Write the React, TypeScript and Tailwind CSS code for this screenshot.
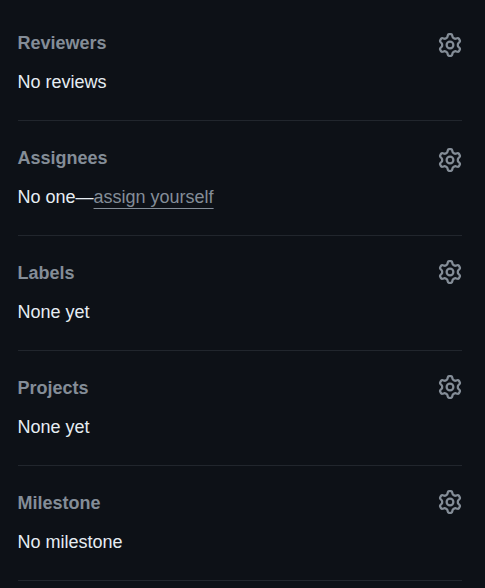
const rows = [
  { title: "Reviewers", text: "No reviews", iconOffset: "mt-3.5" },
  { title: "Assignees", text: "No one—", link: "assign yourself", iconOffset: "mt-3.5" },
  { title: "Labels", text: "None yet", iconOffset: "mt-[11px]" },
  { title: "Projects", text: "None yet", iconOffset: "mt-[11px]" },
  { title: "Milestone", text: "No milestone", iconOffset: "mt-[11px]" },
];

function GearIcon() {
  return (
    <svg viewBox="0 0 16 16" className="block size-6" fill="currentColor" aria-hidden="true">
      <path d="M8 0a8.2 8.2 0 0 1 .701.031C9.444.095 9.99.645 10.16 1.29l.288 1.107c.018.066.079.158.212.224.231.114.454.243.668.386.123.082.233.09.299.071l1.103-.303c.644-.176 1.392.021 1.82.63.27.385.506.792.704 1.218.315.675.111 1.422-.364 1.891l-.814.806c-.049.048-.098.147-.088.294.016.257.016.515 0 .772-.01.147.038.246.088.294l.814.806c.475.469.679 1.216.364 1.891a7.977 7.977 0 0 1-.704 1.217c-.428.61-1.176.807-1.82.63l-1.102-.302c-.067-.019-.177-.011-.3.071a5.909 5.909 0 0 1-.668.386c-.133.066-.194.158-.211.224l-.29 1.106c-.168.646-.715 1.196-1.458 1.26a8.006 8.006 0 0 1-1.402 0c-.743-.064-1.289-.614-1.458-1.26l-.289-1.106c-.018-.066-.079-.158-.212-.224a5.738 5.738 0 0 1-.668-.386c-.123-.082-.233-.09-.299-.071l-1.103.303c-.644.176-1.392-.021-1.82-.63a8.12 8.12 0 0 1-.704-1.218c-.315-.675-.111-1.422.363-1.891l.815-.806c.05-.048.098-.147.088-.294a6.214 6.214 0 0 1 0-.772c.01-.147-.038-.246-.088-.294l-.815-.806C.635 6.045.431 5.298.746 4.623a7.92 7.92 0 0 1 .704-1.217c.428-.61 1.176-.807 1.82-.63l1.102.302c.067.019.177.011.3-.071.214-.143.437-.272.668-.386.133-.066.194-.158.211-.224l.29-1.106C6.009.645 6.556.095 7.299.03 7.53.01 7.764 0 8 0Zm-.571 1.525c-.036.003-.108.036-.137.146l-.289 1.105c-.147.561-.549.967-.998 1.189-.173.086-.34.183-.5.29-.417.278-.97.423-1.529.27l-1.103-.303c-.109-.03-.175.016-.195.045-.22.312-.412.644-.573.99-.014.031-.021.11.059.19l.815.806c.411.406.562.957.53 1.456a4.709 4.709 0 0 0 0 .582c.032.499-.119 1.05-.53 1.456l-.815.806c-.081.08-.073.159-.059.19.162.346.353.677.573.989.02.03.085.076.195.046l1.102-.303c.56-.153 1.113-.008 1.53.27.161.107.328.204.501.29.447.222.85.629.997 1.189l.289 1.105c.029.109.101.143.137.146a6.6 6.6 0 0 0 1.142 0c.036-.003.108-.036.137-.146l.289-1.105c.147-.561.549-.967.998-1.189.173-.086.34-.183.5-.29.417-.278.97-.423 1.529-.27l1.103.303c.109.029.175-.016.195-.045.22-.313.411-.644.573-.99.014-.031.021-.11-.059-.19l-.815-.806c-.411-.406-.562-.957-.53-1.456a4.709 4.709 0 0 0 0-.582c-.032-.499.119-1.05.53-1.456l.815-.806c.081-.08.073-.159.059-.19a6.464 6.464 0 0 0-.573-.989c-.02-.03-.085-.076-.195-.046l-1.102.303c-.56.153-1.113.008-1.53-.27a4.44 4.44 0 0 0-.501-.29c-.447-.222-.85-.629-.997-1.189l-.289-1.105c-.029-.11-.101-.143-.137-.146a6.6 6.6 0 0 0-1.142 0ZM11 8a3 3 0 1 1-6 0 3 3 0 0 1 6 0ZM9.5 8a1.5 1.5 0 1 0-3.001.001A1.5 1.5 0 0 0 9.5 8Z" />
    </svg>
  );
}

export default function App() {
  return (
    <div className="h-[588px] w-[485px] overflow-hidden bg-[#0d1117] pt-1.5 pr-[23px] pl-[17.5px] font-['Liberation_Sans',Arial,sans-serif] text-lg leading-[27px] text-[#e6edf3]">
      {rows.map((row) => (
        <section key={row.title} className="flex h-[115px] items-start justify-between border-b border-[#21262d] pt-[13px]">
          <div className="pt-[11px]">
            <h2 className="font-bold text-[#848d97]">{row.title}</h2>
            <p className="mt-3">
              {row.text}
              {row.link && <a href="#" className="text-[#848d97] underline decoration-1 underline-offset-[5px]">{row.link}</a>}
            </p>
          </div>
          <button aria-label={`Edit ${row.title}`} className={`text-[#848d97] ${row.iconOffset}`}>
            <GearIcon />
          </button>
        </section>
      ))}
    </div>
  );
}
